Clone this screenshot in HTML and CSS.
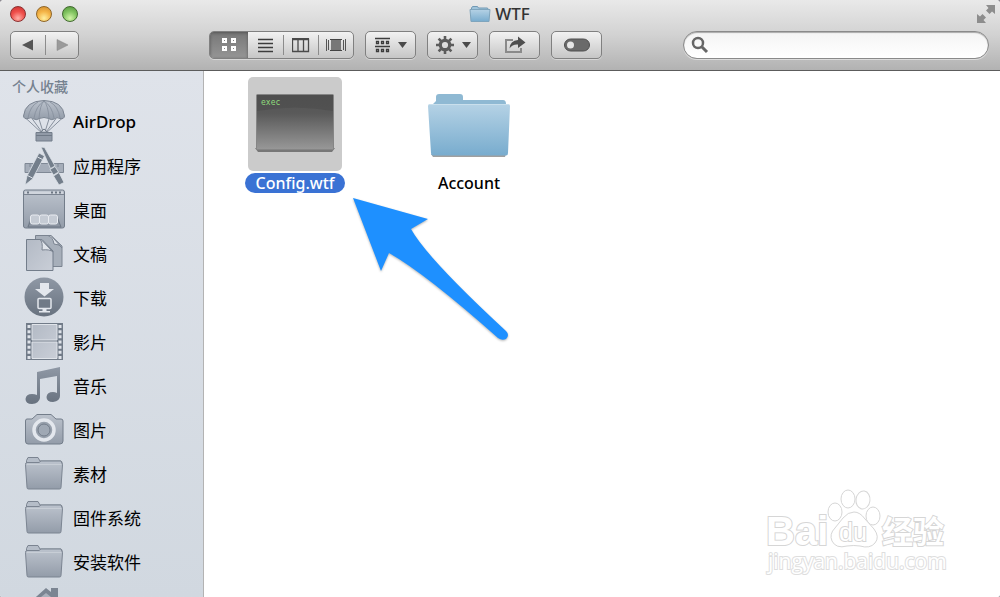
FILE: index.html
```html
<!DOCTYPE html>
<html lang="zh-CN">
<head>
    <meta charset="UTF-8">
    <meta name="viewport" content="width=device-width, initial-scale=1.0">
    <title>WTF</title>
    <link rel="stylesheet" href="styles.css">
</head>
<body>
    <!-- 公用渐变和图形 -->
    <svg class="defs" width="0" height="0" aria-hidden="true">
        <defs>
            <linearGradient id="steel" x1="0" y1="0" x2="0" y2="1">
                <stop offset="0" stop-color="#bcc3cd"/>
                <stop offset="1" stop-color="#939ca9"/>
            </linearGradient>
            <linearGradient id="paper" x1="0" y1="0" x2="1" y2="1">
                <stop offset="0" stop-color="#b3bac5"/>
                <stop offset="1" stop-color="#c9ced7"/>
            </linearGradient>
            <linearGradient id="dark" x1="0" y1="0" x2="0" y2="1">
                <stop offset="0" stop-color="#8f98a5"/>
                <stop offset="1" stop-color="#68727f"/>
            </linearGradient>
            <linearGradient id="blue" x1="0" y1="0" x2="0" y2="1">
                <stop offset="0" stop-color="#b5d2e5"/>
                <stop offset="1" stop-color="#78acce"/>
            </linearGradient>
            <linearGradient id="screen" x1="0" y1="0" x2="0" y2="1">
                <stop offset="0" stop-color="#545454"/>
                <stop offset="0.35" stop-color="#5a5a5a"/>
                <stop offset="1" stop-color="#989898"/>
            </linearGradient>
            <symbol id="folder" viewBox="0 0 42 42">
                <path d="M3.5 12V8.5L5 5.500H15l2 3.500H37.500q1.500 0 1.500 2V13z" fill="#b5bdc8" stroke="#7b8491"/>
                <path d="M2.500 12.500q0-2 1.500-2H16l2-1.500H38l1.500 3.500L38 35.500q0 1.500-1.500 1.500H5.500Q4 37 4 35.500z" fill="url(#steel)" stroke="#7b8491"/>
                <path d="M4 12.500H38" stroke="#c8ced6"/>
            </symbol>
        </defs>
    </svg>

    <div class="window">
        <header class="header">
            <div class="titlebar">
                <div class="lights">
                    <button class="light red" aria-label="关闭"></button>
                    <button class="light yellow" aria-label="最小化"></button>
                    <button class="light green" aria-label="缩放"></button>
                </div>
                <h1 class="title">
                    <svg width="22" height="18" viewBox="0 0 22 18">
                        <path d="M2.500 5V3L3.500 1.500H8.500L9.500 3H18.500L19.500 5z" fill="#9fc4db" stroke="#7199b4"/>
                        <path d="M1 4.500H21L20 16.500H2z" fill="url(#blue)" stroke="#7fa5bd"/>
                    </svg>
                    WTF
                </h1>
                <button class="fullscreen" aria-label="全屏幕">
                    <svg width="20" height="20" viewBox="0 0 20 20" fill="#8d8d8d">
                        <path d="M10 1H19V10L16 7.500 13.500 10 10 6.500 12.500 4z"/>
                        <path d="M1 10L4 12.500 6.500 10 10 13.500 7.500 16 10 19H1z"/>
                    </svg>
                </button>
            </div>
            <div class="toolbar">
                <div class="group nav">
                    <button aria-label="后退"><svg width="12" height="12" viewBox="0 0 12 12"><path d="M0 6L11 0.500V11.500z" fill="#555"/></svg></button>
                    <button aria-label="前进"><svg width="12" height="12" viewBox="0 0 12 12"><path d="M1 0.500L12 6 1 11.500z" fill="#9a9a9a" stroke="#858585" stroke-width="0.500"/></svg></button>
                </div>
                <div class="group views">
                    <button class="active" aria-label="图标">
                        <svg width="16" height="16" viewBox="0 0 16 16" fill="none" stroke="#fff" stroke-width="2">
                            <path d="M2 2H5V5H2zM11 2H14V5H11zM2 10H5V13H2zM11 10H14V13H11z"/>
                        </svg>
                    </button>
                    <button aria-label="列表">
                        <svg width="16" height="16" viewBox="0 0 16 16" stroke="#3c3c3c" stroke-width="1.300">
                            <path d="M0 2.500H15M0 6.500H15M0 10.500H15M0 14.500H15"/>
                        </svg>
                    </button>
                    <button aria-label="分栏">
                        <svg width="18" height="16" viewBox="0 0 18 16" fill="none" stroke="#4a4a4a">
                            <path d="M0.500 2.500H16.500V14.500H0.500zM6 2.500V14.500M11.500 2.500V14.500" stroke-width="1.300"/>
                            <path d="M0 2H17" stroke-width="2"/>
                        </svg>
                    </button>
                    <button aria-label="Cover Flow">
                        <svg width="20" height="16" viewBox="0 0 20 16">
                            <path d="M0.500 2V14M2.500 3V13M17.500 3V13M19.500 2V14" stroke="#555"/>
                            <path d="M5 3H15V13H5z" fill="#777"/>
                            <path d="M4 2.500H16M4 13.500H16" stroke="#444"/>
                        </svg>
                    </button>
                </div>
                <button class="tool" aria-label="排列">
                    <svg width="16" height="16" viewBox="0 0 16 16" fill="none" stroke="#3c3c3c" stroke-width="1.300">
                        <path d="M0 1.500H15M0 9.500H15"/>
                        <path d="M1.500 4.500H3.500V6.500H1.500zM6.500 4.500H8.500V6.500H6.500zM11.500 4.500H13.500V6.500H11.500zM1.500 12.500H3.500V14.500H1.500zM6.500 12.500H8.500V14.500H6.500zM11.500 12.500H13.500V14.500H11.500z"/>
                    </svg>
                    <svg class="caret" width="9" height="6" viewBox="0 0 9 6"><path d="M0 0H9L4.500 6z"/></svg>
                </button>
                <button class="tool" aria-label="操作">
                    <svg width="20" height="20" viewBox="0 0 20 20" fill="none" stroke="#5c5c5c">
                        <circle cx="10" cy="10" r="4.700" stroke-width="3.200"/>
                        <path d="M10 1V5M10 15V19M1 10H5M15 10H19M3.600 3.600L6.500 6.500M13.500 13.500L16.400 16.400M3.600 16.400L6.500 13.500M13.500 6.500L16.400 3.600" stroke-width="2.600"/>
                    </svg>
                    <svg class="caret" width="9" height="6" viewBox="0 0 9 6"><path d="M0 0H9L4.500 6z"/></svg>
                </button>
                <button class="tool" aria-label="共享">
                    <svg width="22" height="18" viewBox="0 0 22 18">
                        <path d="M9 4H2V16H17V12" fill="none" stroke="#8a8a8a" stroke-width="2"/>
                        <path d="M5.500 12.500Q6 4.500 14 4V0.500L21.500 6.500 14 12V8.500Q8.500 8 5.500 12.500z" fill="#4f4f4f"/>
                    </svg>
                </button>
                <button class="tool" aria-label="开关">
                    <svg width="26" height="14" viewBox="0 0 26 14">
                        <rect x="0.500" y="1" width="25" height="12" rx="6" fill="#6a6a6a" stroke="#4e4e4e"/>
                        <circle cx="6.500" cy="7" r="3.500" fill="#e6e6e6"/>
                    </svg>
                </button>
                <label class="search">
                    <svg width="18" height="18" viewBox="0 0 18 18" fill="none" stroke="#666">
                        <circle cx="7" cy="7" r="5" stroke-width="2.500"/>
                        <path d="M11 11L16 16" stroke-width="3"/>
                    </svg>
                    <input type="text" aria-label="搜索">
                </label>
            </div>
        </header>

        <div class="body">
            <nav class="sidebar">
                <h2>个人收藏</h2>
                <a class="latin" href="#">
                    <svg viewBox="0 0 42 42">
                        <path d="M1.500 17L21 35 40.500 17M9 18.500L21 35 33 18.500M16 19L21 35 26 19" fill="none" stroke="#87909d"/>
                        <path d="M0.500 16Q2 1 21 0.500 40 1 41.500 16 41 19.500 37 18.500 34 16.500 31 19 28 20.500 26 18.500 21 16.500 16 18.500 14 20.500 11 19 8 16.500 5 18.500 1 19.500 0.500 16z" fill="url(#steel)" stroke="#7b8491"/>
                        <path d="M21 1Q13 6 11 18M21 1Q17 5 16 18M21 1Q25 5 26 18M21 1Q29 6 31 18M15 2Q7 6 5 18M27 2Q35 6 37 18" fill="none" stroke="#848d9a" stroke-width="0.800"/>
                        <path d="M13 32.500H29V41H13z" fill="#919aa7" stroke="#737d8a"/>
                        <path d="M13 35.500H29M17 32.500L21 29 25 32.500" fill="none" stroke="#6f7986"/>
                    </svg>
                    AirDrop
                </a>
                <a href="#">
                    <svg viewBox="0 0 42 42">
                        <path d="M2 19.500H40.500V28.500H2z" fill="#a5adb9" stroke="#7f8895"/>
                        <path d="M7 20V23M12 20V23M30 20V23M35 20V23" stroke="#7f8895"/>
                        <g stroke="#dde2e9" stroke-width="0.800" fill="#737e8b">
                            <path d="M18 3L21.500 3.500 32 22 27.500 24.500z"/>
                            <path d="M27 25.500L32 22.500 35.500 28 30.500 31z"/>
                            <path d="M30.500 32L36 28.500 41 38.500 36 41z"/>
                            <path d="M16 9L21.500 12 9.500 35 2 41 4 32z"/>
                        </g>
                        <path d="M14.500 13L19.500 15.500M4.500 31.500L9.500 34" stroke="#dde2e9"/>
                    </svg>
                    应用程序
                </a>
                <a href="#">
                    <svg viewBox="0 0 42 42">
                        <rect x="0.500" y="2" width="41" height="38" rx="2" fill="url(#steel)" stroke="#737d8a"/>
                        <path d="M1 6.500H41" stroke="#7b8491"/>
                        <path d="M2 3.500H40V6H2z" fill="#d0d5dd"/>
                        <path d="M4 4.500H6M28 4.500H30M32 4.500H34M36 4.500H38" stroke="#6d7784" stroke-width="2"/>
                        <path d="M8 28H35L38 39H4z" fill="#8b94a1"/>
                        <path d="M9 29L5 39H38L34 29" fill="none" stroke="#6d7784"/>
                        <g fill="#c5cbd4" stroke="#e9ecf1">
                            <rect x="7.500" y="27" width="9" height="9" rx="2"/>
                            <rect x="16.500" y="27" width="9" height="9" rx="2"/>
                            <rect x="25.500" y="27" width="9" height="9" rx="2"/>
                        </g>
                    </svg>
                    桌面
                </a>
                <a href="#">
                    <svg viewBox="0 0 42 42">
                        <path d="M12.500 3.500H28L39 14V34.500H12.500z" fill="#a7afba" stroke="#7b8491"/>
                        <path d="M25 3.500Q30 5 31 12 37 12 39 16L28 3.500z" fill="#e1e5eb" stroke="#7b8491"/>
                        <path d="M3.500 7.500H19L30 19V38.500H3.500z" fill="url(#paper)" stroke="#737d8a"/>
                        <path d="M17 7.500Q20 10 19 18 27 17 30 20L18 7.500z" fill="#e1e5eb" stroke="#7b8491"/>
                    </svg>
                    文稿
                </a>
                <a href="#">
                    <svg viewBox="0 0 42 42">
                        <circle cx="21" cy="21" r="19.500" fill="url(#dark)"/>
                        <path d="M17 7H26V13H31L21.500 20.500 12 13H17z" fill="#e3e7ed"/>
                        <rect x="15" y="22.500" width="13" height="10" rx="1" fill="#707a87" stroke="#e3e7ed" stroke-width="1.500"/>
                        <path d="M19.500 33H23.500V35H27V36.500H16V35H19.500z" fill="#e3e7ed"/>
                    </svg>
                    下载
                </a>
                <a href="#">
                    <svg viewBox="0 0 42 42">
                        <path d="M3 3H40V40H3z" fill="#717b88"/>
                        <path d="M9 4.500H34V20H9zM9 22H34V38.500H9z" fill="url(#paper)" stroke="#e0e4ea"/>
                        <path d="M6 5V39M37 5V39" stroke="#e0e4ea" stroke-width="3" stroke-dasharray="3 2.160"/>
                    </svg>
                    影片
                </a>
                <a href="#">
                    <svg viewBox="0 0 42 42">
                        <path d="M14 8L37 3V32Q37 37 30 38 23.500 38 23.500 33 24 28 30 28 32 28 34 29V12L17 15V34Q16 39.500 9 40 2.500 40 2.500 35 3 30 9 30 12 30 14 31z" fill="url(#dark)"/>
                    </svg>
                    音乐
                </a>
                <a href="#">
                    <svg viewBox="0 0 42 42">
                        <path d="M4 11H9L14 6.500H28L33 11H38Q40 11 40 13V33Q40 36 37 36H5Q2.500 36 2.500 33V13Q2.500 11 4 11z" fill="url(#steel)" stroke="#737d8a"/>
                        <circle cx="21" cy="22" r="10" fill="#98a1ad" stroke="#e3e7ed" stroke-width="3.500"/>
                        <circle cx="21" cy="22" r="6" fill="#9fa8b4" stroke="#737d8a"/>
                    </svg>
                    图片
                </a>
                <a href="#"><svg><use href="#folder"/></svg>素材</a>
                <a href="#"><svg><use href="#folder"/></svg>固件系统</a>
                <a href="#"><svg><use href="#folder"/></svg>安装软件</a>
                <a href="#" aria-label="个人">
                    <svg viewBox="0 0 42 42">
                        <path d="M23 4L28 8V4H35V14L41 20H37V40H9V20H5z" fill="#7b8592"/>
                        <path d="M23 9L33 17V36H13V17z" fill="#a9b1bc"/>
                    </svg>
                </a>
            </nav>

            <main class="files">
                <a class="file selected" href="#">
                    <span class="thumb">
                        <svg width="94" height="94" viewBox="0 0 94 94">
                            <path d="M7 71H87L84 75H10z" fill="#777"/>
                            <rect x="8.500" y="17.500" width="77" height="55" rx="1" fill="url(#screen)" stroke="#858585"/>
                            <path d="M9 18H85V34Q47 27 9 34z" fill="#4a4a4a" opacity="0.500"/>
                            <text class="exec" x="13" y="28">exec</text>
                        </svg>
                    </span>
                    <span class="name">Config.wtf</span>
                </a>
                <a class="file" href="#">
                    <span class="thumb">
                        <svg width="94" height="94" viewBox="0 0 94 94">
                            <path d="M9 77H84L83 80H11z" fill="#777" opacity="0.700"/>
                            <path d="M11 27L14 24V20Q14 17 17 17H38Q41 17 41 20V23H81Q84 23 84 27V30H11z" fill="#8fb9d3"/>
                            <path d="M6 29Q6 27 8 27H86Q88 27 88 29L86 76Q86 78.500 84 78.500H11Q9 78.500 9 76z" fill="url(#blue)"/>
                            <path d="M7 27.500H87" stroke="#c9dfec"/>
                        </svg>
                    </span>
                    <span class="name">Account</span>
                </a>

                <svg class="arrow" width="160" height="146" viewBox="0 0 160 146">
                    <path d="M1 1L76 22 59 32Q75 61 154 134 158 138 154 142 150 144 146 141 74 77 37 56L29 74z" fill="#1e90ff"/>
                </svg>

                <svg class="watermark" width="190" height="96" viewBox="0 0 190 96">
                    <g fill="#fff" stroke="#d6d6d6">
                        <ellipse cx="73" cy="25" rx="7" ry="9"/>
                        <ellipse cx="86" cy="12" rx="7" ry="9"/>
                        <ellipse cx="101" cy="13" rx="7" ry="9" transform="rotate(8 101 13)"/>
                        <ellipse cx="111" cy="29" rx="7" ry="9"/>
                        <path d="M92 25Q98 25 103 32L112 42Q118 50 113 56 108 62 98 59 92 58 85 59 74 62 70 54 67 47 73 41L81 31Q86 25 92 25z"/>
                    </g>
                    <text class="bai" x="4" y="58">Bai</text>
                    <text class="du" x="77" y="54">du</text>
                    <text class="jingyan" x="120" y="56">经验</text>
                    <text class="site" x="6" y="82">jingyan.baidu.com</text>
                </svg>
            </main>
        </div>
    </div>
</body>
</html>
```
FILE: styles.css
```css
* {
    box-sizing: border-box;
}
body {
    margin: 0;
    background-color: #8d8a92;
    font-family: "Noto Sans", "Noto Sans CJK SC", sans-serif;
    font-size: 17px;
    color: #000;
}
button {
    margin: 0;
    padding: 0;
    border: none;
    background: none;
}
a {
    color: inherit;
    text-decoration: none;
}
.defs {
    position: absolute;
}
.window {
    display: flex;
    flex-direction: column;
    height: 100vh;
    overflow: hidden;
    border-radius: 4px 4px 2px 2px;
    background-color: #fff;
}

/* 标题栏 */
.header {
    flex: none;
    padding: 0 11px 11px 10px;
    background: linear-gradient(#e9e9e9, #d2d2d2 50%, #b2b2b2);
    border-bottom: 1px solid #5c5c5c;
}
.titlebar {
    display: grid;
    grid-template-columns: 1fr auto 1fr;
    align-items: center;
    height: 31px;
    padding-bottom: 3px;
}
.lights {
    display: flex;
    gap: 10px;
}
.light {
    width: 16px;
    height: 16px;
    border-radius: 50%;
    border: 1px solid #555;
}
.red {
    border-color: #8c3030;
    background: radial-gradient(circle at 50% 80%, #ffb0a8, #f0504c 50%, #c8302f);
}
.yellow {
    border-color: #8f6527;
    background: radial-gradient(circle at 50% 80%, #fff0a0, #f5b548 50%, #cf8a2a);
}
.green {
    border-color: #42692f;
    background: radial-gradient(circle at 50% 80%, #d2f5a8, #83c562 50%, #4f9439);
}
.title {
    display: flex;
    align-items: center;
    gap: 4px;
    margin: 0;
    font-size: 17px;
    font-weight: 500;
    line-height: 28px;
    color: #333;
}
.fullscreen {
    justify-self: end;
    height: 20px;
    margin-right: -7px;
}
.fullscreen svg {
    display: block;
}

/* 工具栏 */
.toolbar {
    display: flex;
    gap: 11px;
}
.group,
.tool {
    display: flex;
    align-items: center;
    height: 28px;
    border: 1px solid #808080;
    border-radius: 5px;
    background: linear-gradient(#f2f2f2, #c6c6c6);
    box-shadow: 0 1px 0 rgba(255, 255, 255, 0.4);
}
.tool {
    justify-content: center;
    gap: 7px;
    width: 51px;
}
.caret {
    fill: #4a4a4a;
}
.group button {
    display: flex;
    align-items: center;
    justify-content: center;
    flex: 1;
    height: 26px;
}
.group button + button::before {
    content: "";
    width: 1px;
    height: 20px;
    margin-right: auto;
    background-color: #8c8c8c;
}
.group button + button svg {
    margin-right: auto;
}
.nav {
    width: 69px;
    margin-right: 119px;
}
.views {
    width: 145px;
    overflow: hidden;
}
.group .active {
    flex: none;
    width: 38px;
    background: linear-gradient(#777, #959595);
    box-shadow: inset 0 1px 3px #555;
}
.group .active + button::before {
    background: none;
}
.search {
    display: flex;
    align-items: center;
    flex: 1;
    height: 28px;
    margin-left: 70px;
    padding: 0 7px;
    gap: 6px;
    border: 1px solid #8a8a8a;
    border-radius: 14px;
    background: linear-gradient(#f4f4f4, #fff);
    box-shadow: inset 0 1px 1px #aaa, 0 1px 0 #ddd;
}
.search input {
    flex: 1;
    min-width: 0;
    border: none;
    outline: none;
    background: none;
    font: inherit;
}

/* 边栏 */
.body {
    display: flex;
    flex: 1;
    min-height: 0;
}
.sidebar {
    flex: none;
    width: 204px;
    overflow: hidden;
    background: linear-gradient(#dfe3ea, #d1d8e0);
    border-right: 1px solid #b3b3b3;
}
.sidebar h2 {
    margin: 0;
    padding: 4px 12px 0;
    font-size: 14px;
    font-weight: 500;
    line-height: 24px;
    color: #75818f;
}
.sidebar a {
    display: flex;
    align-items: center;
    gap: 8px;
    height: 44px;
    padding-left: 23px;
    font-family: "Noto Sans CJK SC", sans-serif;
}
.sidebar .latin {
    font-family: "Noto Sans", sans-serif;
    font-weight: 500;
}
.sidebar svg {
    width: 42px;
    height: 42px;
}

/* 文件区 */
.files {
    position: relative;
    flex: 1;
    display: grid;
    grid-template-columns: repeat(auto-fill, 174px);
    align-content: start;
    padding: 6px 4px;
}
.file {
    display: flex;
    flex-direction: column;
    align-items: center;
    gap: 2px;
}
.thumb {
    width: 94px;
    height: 94px;
    border-radius: 5px;
}
.thumb svg {
    display: block;
}
.name {
    padding: 0 10px;
    border-radius: 10px;
    font-size: 16px;
    font-weight: 500;
    line-height: 20px;
}
.selected .thumb {
    background-color: #cbcbcb;
}
.selected .name {
    background-color: #3a72d4;
    color: #fff;
}
.exec {
    font-family: "DejaVu Sans Mono", monospace;
    font-size: 8px;
    fill: #8fdc7c;
}
.arrow {
    position: absolute;
    left: 148px;
    top: 126px;
    filter: drop-shadow(0 1px 1px rgba(0, 0, 0, 0.3));
}

/* 水印 */
.watermark {
    position: absolute;
    right: 48px;
    bottom: 14px;
}
.watermark text {
    fill: #fff;
    stroke: #d6d6d6;
    stroke-width: 2px;
    paint-order: stroke;
}
.watermark .bai {
    font-family: "Liberation Sans", sans-serif;
    font-size: 40px;
    font-weight: bold;
}
.watermark .du {
    font-family: "Liberation Sans", sans-serif;
    font-size: 25px;
}
.watermark .jingyan {
    font-family: "Noto Sans CJK SC", sans-serif;
    font-size: 31px;
    font-weight: bold;
}
.watermark .site {
    font-family: "Open Sans", sans-serif;
    font-size: 21px;
    stroke: #dedede;
}
```
